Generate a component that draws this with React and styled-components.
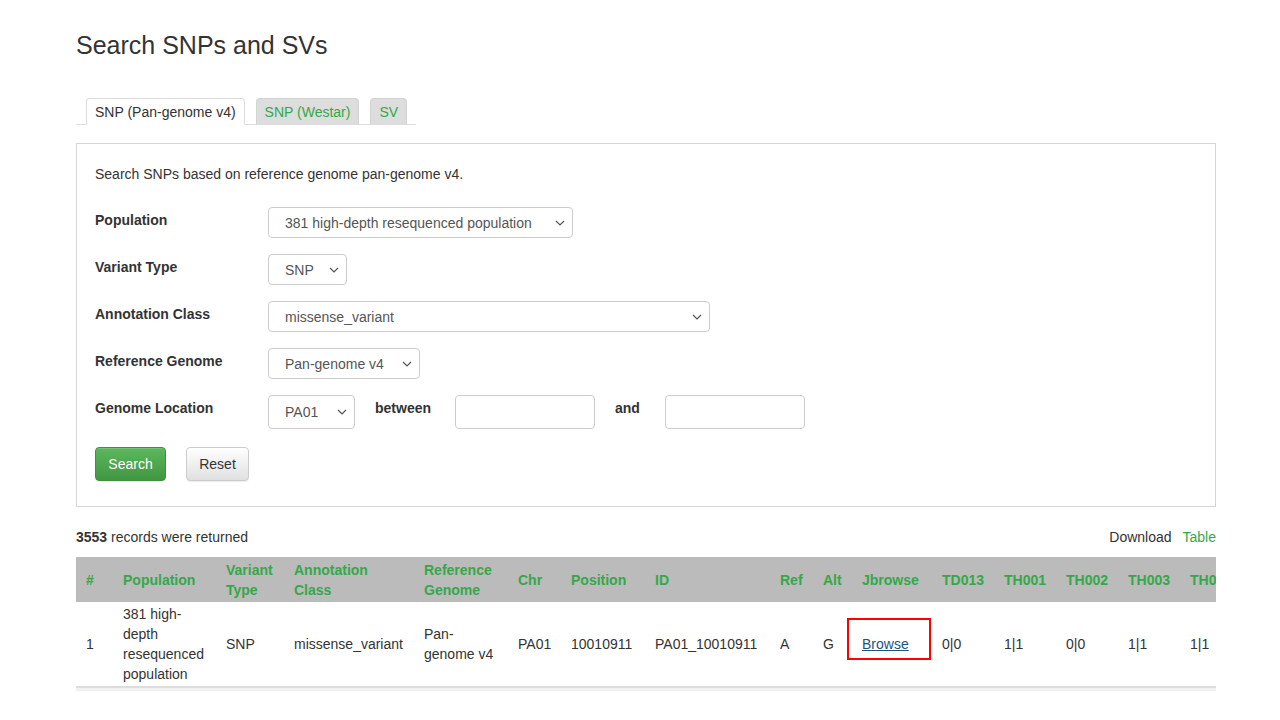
import React from "react";
import styled, { createGlobalStyle } from "styled-components";

const GREEN = "#34a849";

const CHEVRON =
  "url(\"data:image/svg+xml;utf8,<svg xmlns='http://www.w3.org/2000/svg' width='10' height='6' viewBox='0 0 10 6'><path d='M1 1l4 4 4-4' fill='none' stroke='%23555' stroke-width='1.2'/></svg>\")";

const Global = createGlobalStyle`
  html, body { margin: 0; padding: 0; background: #fff; }
  body {
    font-family: "Liberation Sans", Arial, Helvetica, sans-serif;
    font-size: 14px;
    line-height: 20px;
    color: #333;
  }
  *, *::before, *::after { box-sizing: border-box; }
`;

const Page = styled.div`
  width: 1140px;
  margin-left: 76px;
  padding-top: 30px;
  padding-bottom: 30px;
`;

const Title = styled.h1`
  margin: 0;
  font-size: 25px;
  line-height: 30px;
  font-weight: 400;
  color: #333;
`;

const Tabs = styled.ul`
  list-style: none;
  margin: 38px 0 0;
  padding: 0 0 0 10px;
  width: 340px;
  display: flex;
  border-bottom: 1px solid #ddd;
`;

const Tab = styled.li`
  flex: none;
  white-space: nowrap;
  margin: 0 11px -1px 0;
  padding: 3px 8px 2px;
  line-height: 20px;
  border: 1px solid ${(p) => (p.$active ? "#ddd" : "#d3d3d3")};
  border-bottom-color: ${(p) => (p.$active ? "#fff" : "#ddd")};
  border-radius: 4px 4px 0 0;
  background: ${(p) => (p.$active ? "#fff" : "#ddd")};
  color: ${(p) => (p.$active ? "#333" : GREEN)};
  cursor: pointer;
`;

const Panel = styled.div`
  margin-top: 18px;
  border: 1px solid #d5d5d5;
  padding: 20px 18px 25px;
`;

const Intro = styled.p`
  margin: 0 0 23px;
`;

const Form = styled.div`
  display: flex;
  flex-direction: column;
  gap: 16px;
`;

const Row = styled.div`
  display: flex;
  align-items: flex-start;
`;

const Label = styled.label`
  width: ${(p) => p.$w || 173}px;
  flex: none;
  padding-top: 3px;
  font-weight: 700;
  color: #333;
  margin-right: ${(p) => p.$mr || 0}px;
`;

const Select = styled.select`
  appearance: none;
  -webkit-appearance: none;
  width: ${(p) => p.$w}px;
  height: ${(p) => p.$h || 31}px;
  padding: 0 24px 0 16px;
  font-family: "Liberation Sans", Arial, sans-serif;
  font-size: 14px;
  color: #555;
  background: #fff ${CHEVRON} no-repeat right 7px center;
  background-size: 10px 6px;
  border: 1px solid #ccc;
  border-radius: 4px;
  margin-right: ${(p) => p.$mr || 0}px;
  flex: none;
`;

const Input = styled.input`
  width: 140px;
  height: 34px;
  border: 1px solid #ccc;
  border-radius: 4px;
  padding: 6px 12px;
  font-size: 14px;
  margin-right: ${(p) => p.$mr || 0}px;
  flex: none;
`;

const Buttons = styled.div`
  display: flex;
  gap: 20px;
  margin-top: 2px;
`;

const Button = styled.button`
  height: 34px;
  padding: 6px 12px;
  font-family: "Liberation Sans", Arial, sans-serif;
  font-size: 14px;
  line-height: 20px;
  border-radius: 4px;
  cursor: pointer;
  ${(p) =>
    p.$primary
      ? `
    min-width: 71px;
    color: #fff;
    background: linear-gradient(to bottom, #5cb85c 0%, #419641 100%);
    border: 1px solid #3e8f3e;
    box-shadow: inset 0 1px 0 rgba(255,255,255,.15), 0 1px 1px rgba(0,0,0,.075);
  `
      : `
    min-width: 63px;
    color: #333;
    background: linear-gradient(to bottom, #fff 0%, #e0e0e0 100%);
    border: 1px solid #ccc;
    box-shadow: inset 0 1px 0 rgba(255,255,255,.15), 0 1px 1px rgba(0,0,0,.075);
  `}
`;

const ResultBar = styled.div`
  margin-top: 20px;
  display: flex;
  justify-content: space-between;
  line-height: 20px;
`;

const Links = styled.div`
  display: flex;
  gap: 11px;
`;

const Link = styled.a`
  color: ${(p) => (p.$green ? GREEN : "#333")};
  text-decoration: none;
  cursor: pointer;
`;

const TableWrap = styled.div`
  margin-top: 10px;
  width: 1140px;
  overflow: hidden;
  border-bottom: 3px solid #f1f1f1;
`;

const Table = styled.table`
  border-collapse: collapse;
  table-layout: fixed;
  width: ${(p) => p.$w}px;
`;

const Th = styled.th`
  background: #bbbbbb;
  color: ${GREEN};
  font-weight: 700;
  text-align: left;
  vertical-align: middle;
  padding: 3px 6px 2px 10px;
  line-height: 20px;
  white-space: ${(p) => (p.$wrap ? "normal" : "nowrap")};
  overflow: hidden;
`;

const Td = styled.td`
  padding: 2px 6px 2px 10px;
  line-height: 20px;
  vertical-align: middle;
  border-bottom: 2px solid #ddd;
  white-space: ${(p) => (p.$wrap ? "normal" : "nowrap")};
  overflow: ${(p) => (p.$visible ? "visible" : "hidden")};
`;

const BrowseLink = styled.a`
  position: relative;
  display: inline-block;
  line-height: 20px;
  color: #23527c;
  text-decoration: underline;
  cursor: pointer;
  &::after {
    content: "";
    position: absolute;
    left: -15px;
    top: -16px;
    width: 84px;
    height: 42px;
    border: 2px solid #f00;
  }
`;

const columns = [
  { key: "#", w: 37 },
  { key: "Population", w: 103 },
  { key: "Variant Type", w: 68, wrap: true },
  { key: "Annotation Class", w: 130, wrap: true },
  { key: "Reference Genome", w: 94, wrap: true },
  { key: "Chr", w: 53 },
  { key: "Position", w: 84 },
  { key: "ID", w: 125 },
  { key: "Ref", w: 43 },
  { key: "Alt", w: 39 },
  { key: "Jbrowse", w: 80 },
  { key: "TD013", w: 62 },
  { key: "TH001", w: 62 },
  { key: "TH002", w: 62 },
  { key: "TH003", w: 62 },
  { key: "TH004", w: 62 },
  { key: "TH005", w: 62 },
  { key: "TH006", w: 62 },
  { key: "TH007", w: 62 },
  { key: "TH008", w: 62 },
];

const tableWidth = columns.reduce((s, c) => s + c.w, 0);

const genotypes = ["0|0", "1|1", "0|0", "1|1", "1|1", "0|0", "1|1", "0|0", "1|1"];

export default function App() {
  return (
    <>
      <Global />
      <Page>
        <Title>Search SNPs and SVs</Title>
        <Tabs>
          <Tab $active>SNP (Pan-genome v4)</Tab>
          <Tab>SNP (Westar)</Tab>
          <Tab>SV</Tab>
        </Tabs>
        <Panel>
          <Intro>Search SNPs based on reference genome pan-genome v4.</Intro>
          <Form>
            <Row>
              <Label>Population</Label>
              <Select $w={305} defaultValue="381">
                <option value="381">381 high-depth resequenced population</option>
              </Select>
            </Row>
            <Row>
              <Label>Variant Type</Label>
              <Select $w={79} defaultValue="SNP">
                <option value="SNP">SNP</option>
              </Select>
            </Row>
            <Row>
              <Label>Annotation Class</Label>
              <Select $w={442} defaultValue="missense_variant">
                <option value="missense_variant">missense_variant</option>
              </Select>
            </Row>
            <Row>
              <Label>Reference Genome</Label>
              <Select $w={152} defaultValue="pan">
                <option value="pan">Pan-genome v4</option>
              </Select>
            </Row>
            <Row>
              <Label>Genome Location</Label>
              <Select $w={87} $h={34} $mr={20} defaultValue="PA01">
                <option value="PA01">PA01</option>
              </Select>
              <Label $w={80}>between</Label>
              <Input $mr={20} />
              <Label $w={50}>and</Label>
              <Input />
            </Row>
            <Buttons>
              <Button $primary>Search</Button>
              <Button>Reset</Button>
            </Buttons>
          </Form>
        </Panel>
        <ResultBar>
          <span>
            <b>3553</b> records were returned
          </span>
          <Links>
            <Link>Download</Link>
            <Link $green>Table</Link>
          </Links>
        </ResultBar>
        <TableWrap>
          <Table $w={tableWidth}>
            <colgroup>
              {columns.map((c) => (
                <col key={c.key} style={{ width: c.w }} />
              ))}
            </colgroup>
            <thead>
              <tr>
                {columns.map((c) => (
                  <Th key={c.key} $wrap={c.wrap}>
                    {c.key}
                  </Th>
                ))}
              </tr>
            </thead>
            <tbody>
              <tr>
                <Td>1</Td>
                <Td $wrap>381 high-depth resequenced population</Td>
                <Td>SNP</Td>
                <Td>missense_variant</Td>
                <Td $wrap>Pan-genome v4</Td>
                <Td>PA01</Td>
                <Td>10010911</Td>
                <Td>PA01_10010911</Td>
                <Td>A</Td>
                <Td>G</Td>
                <Td $visible>
                  <BrowseLink>Browse</BrowseLink>
                </Td>
                {genotypes.map((g, i) => (
                  <Td key={i}>{g}</Td>
                ))}
              </tr>
            </tbody>
          </Table>
        </TableWrap>
      </Page>
    </>
  );
}
